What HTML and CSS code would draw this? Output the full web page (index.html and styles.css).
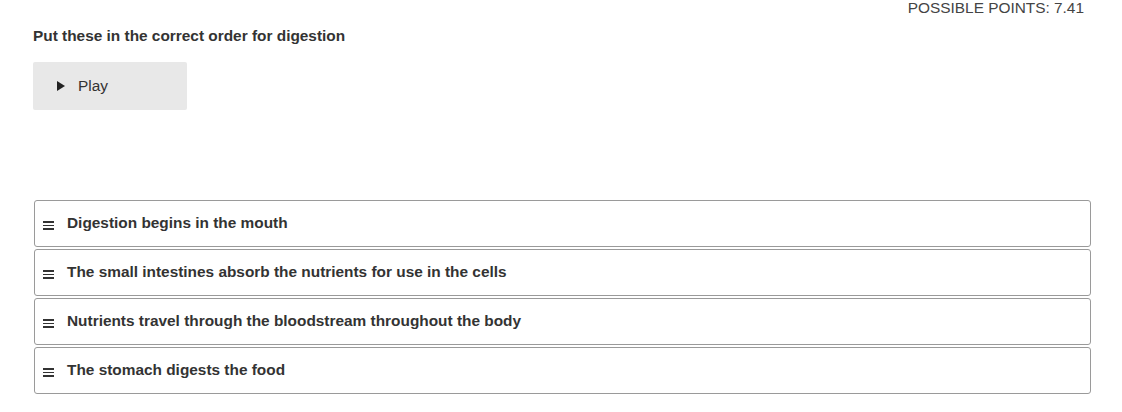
FILE: index.html
```html
<!DOCTYPE html>
<html>
<head>
<meta charset="utf-8">
<link rel="stylesheet" href="styles.css">
</head>
<body>
<div class="page">
  <div class="points">POSSIBLE POINTS: 7.41</div>
  <div class="question">Put these in the correct order for digestion</div>
  <button class="play"><span class="tri"></span><span>Play</span></button>
  <ul class="list">
    <li class="item"><span class="grip"><i></i><i></i><i></i></span><span class="label">Digestion begins in the mouth</span></li>
    <li class="item"><span class="grip"><i></i><i></i><i></i></span><span class="label">The small intestines absorb the nutrients for use in the cells</span></li>
    <li class="item"><span class="grip"><i></i><i></i><i></i></span><span class="label">Nutrients travel through the bloodstream throughout the body</span></li>
    <li class="item"><span class="grip"><i></i><i></i><i></i></span><span class="label">The stomach digests the food</span></li>
  </ul>
</div>
</body>
</html>
```
FILE: styles.css
```css
* { box-sizing: border-box; }
html, body { margin: 0; padding: 0; background: #fff; }
body { font-family: "Liberation Sans", Arial, sans-serif; color: #333; }
.page { padding: 0 31px 0 33px; display: flex; flex-direction: column; }
.points { align-self: flex-end; font-size: 15.4px; line-height: 16px; color: #444; margin-right: 7px; }
.question { font-size: 15.4px; font-weight: bold; line-height: 18px; margin-top: 11px; color: #333; }
.play { width: 154px; height: 48px; margin-top: 17px; border: none; border-radius: 2px; background: #e8e8e8; display: flex; align-items: center; padding: 0 0 0 24px; gap: 13px; font-family: inherit; font-size: 15.4px; color: #333; cursor: pointer; }
.tri { width: 0; height: 0; border-left: 8px solid #222; border-top: 5px solid transparent; border-bottom: 5px solid transparent; }
.list { list-style: none; margin: 90px 0 0 1px; padding: 0; display: flex; flex-direction: column; gap: 2px; }
.item { height: 47px; border: 1px solid #9a9a9a; border-radius: 3px; display: flex; align-items: center; padding: 0 0 0 8px; }
.grip { width: 11px; display: flex; flex-direction: column; gap: 2px; margin: 4px 13px 0 0; }
.grip i { display: block; height: 1.6px; background: #333; }
.label { font-size: 15.4px; font-weight: bold; color: #333; padding-bottom: 2px; }
```
